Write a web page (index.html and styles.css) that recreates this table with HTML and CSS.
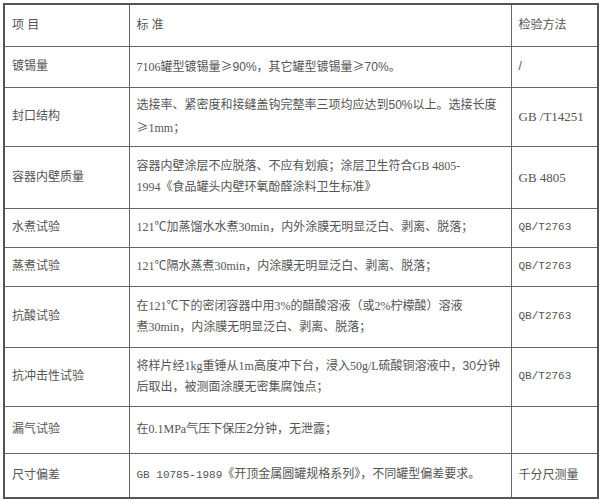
FILE: index.html
```html
<!DOCTYPE html>
<html lang="zh">
<head>
<meta charset="utf-8">
<link rel="stylesheet" href="styles.css">
</head>
<body>
<table class="spec">
  <colgroup>
    <col class="c-item">
    <col class="c-std">
    <col class="c-method">
  </colgroup>
  <tr class="h42">
    <td>项&nbsp;目</td>
    <td>标&nbsp;准</td>
    <td>检验方法</td>
  </tr>
  <tr class="h41">
    <td>镀锡量</td>
    <td class="std"><span class="num">7106</span>罐型镀锡量<span class="cjk">≥</span><span class="sans">90%</span>，其它罐型镀锡量<span class="cjk">≥</span><span class="sans">70%</span>。</td>
    <td>/</td>
  </tr>
  <tr class="h59">
    <td>封口结构</td>
    <td class="std">选接率、紧密度和接缝盖钩完整率三项均应达到<span class="sans">50%</span>以上。选接长度<br><span class="cjk">≥</span><span class="num">1mm</span>；</td>
    <td class="serif">GB /T14251</td>
  </tr>
  <tr class="h62">
    <td>容器内壁质量</td>
    <td class="std">容器内壁涂层不应脱落、不应有划痕；涂层卫生符合<span class="num">GB 4805-</span><br><span class="num">1994</span>《食品罐头内壁环氧酚醛涂料卫生标准》</td>
    <td class="serif">GB 4805</td>
  </tr>
  <tr class="h39">
    <td>水煮试验</td>
    <td class="std"><span class="num">121</span>℃加蒸馏水水煮<span class="num">30min</span>，内外涂膜无明显泛白、剥离、脱落；</td>
    <td class="mono">QB/T2763</td>
  </tr>
  <tr class="h39">
    <td>蒸煮试验</td>
    <td class="std"><span class="num">121</span>℃隔水蒸煮<span class="num">30min</span>，内涂膜无明显泛白、剥离、脱落；</td>
    <td class="mono">QB/T2763</td>
  </tr>
  <tr class="h61">
    <td>抗酸试验</td>
    <td class="std">在<span class="num">121</span>℃下的密闭容器中用<span class="num">3%</span>的醋酸溶液（或<span class="num">2%</span>柠檬酸）溶液<br>煮<span class="num">30min</span>，内涂膜无明显泛白、剥离、脱落；</td>
    <td class="mono">QB/T2763</td>
  </tr>
  <tr class="h59">
    <td>抗冲击性试验</td>
    <td class="std">将样片经<span class="num">1kg</span>重锤从<span class="num">1m</span>高度冲下台，浸入<span class="num">50g/L</span>硫酸铜溶液中，<span class="sans">30</span>分钟<br>后取出，被测面涂膜无密集腐蚀点；</td>
    <td class="mono">QB/T2763</td>
  </tr>
  <tr class="h47">
    <td>漏气试验</td>
    <td class="std">在<span class="num">0.1MPa</span>气压下保压<span class="sans">2</span>分钟，无泄露；</td>
    <td></td>
  </tr>
  <tr class="h45">
    <td>尺寸偏差</td>
    <td class="std"><span class="mono">GB 10785-1989</span>《开顶金属圆罐规格系列》，不同罐型偏差要求。</td>
    <td>千分尺测量</td>
  </tr>
</table>
</body>
</html>
```
FILE: styles.css
```css
html, body {
  margin: 0;
  padding: 0;
  background: #ffffff;
}
body {
  padding: 3px;
}
.spec {
  border-collapse: collapse;
  width: 594px;
  table-layout: fixed;
  border: 2px solid #555555;
  font-family: "Liberation Sans", "Noto Sans CJK SC", sans-serif;
  font-size: 12px;
  color: #555555;
}
.c-item { width: 125px; }
.c-std { width: 382px; }
.c-method { width: 87px; }
.spec td {
  border: 1px solid #666666;
  padding: 0 5px 0 7px;
  vertical-align: middle;
  line-height: 21px;
  white-space: nowrap;
  overflow: hidden;
}
.std {
  font-family: "Liberation Serif", "Noto Sans CJK SC", serif;
}
.num {
  font-family: "Liberation Serif", serif;
}
.sans {
  font-family: "Liberation Sans", sans-serif;
}
.cjk {
  font-family: "Noto Sans CJK SC", sans-serif;
}
.serif {
  font-family: "Liberation Serif", serif;
  font-size: 13px;
}
.mono {
  font-family: "Liberation Mono", monospace;
  font-size: 11px;
}
.h42 { height: 42px; }
.h41 { height: 41px; }
.h59 { height: 59px; }
.h62 { height: 62px; }
.h39 { height: 39px; }
.h61 { height: 61px; }
.h47 { height: 47px; }
.h45 { height: 45px; }
```
